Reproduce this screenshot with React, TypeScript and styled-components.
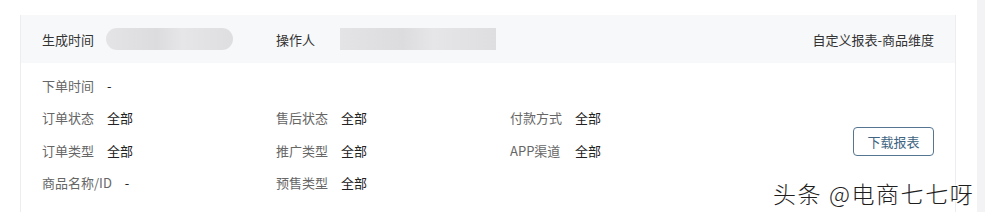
import styled, { createGlobalStyle } from "styled-components";

const GlobalStyle = createGlobalStyle`
  html, body {
    margin: 0;
    padding: 0;
    background: #fff;
    font-family: "Noto Sans CJK SC", "Liberation Sans", sans-serif;
  }
`;

type Field = { label: string; value: string };

const rows: (Field | null)[][] = [
  [{ label: "下单时间", value: "-" }, null, null],
  [
    { label: "订单状态", value: "全部" },
    { label: "售后状态", value: "全部" },
    { label: "付款方式", value: "全部" },
  ],
  [
    { label: "订单类型", value: "全部" },
    { label: "推广类型", value: "全部" },
    { label: "APP渠道", value: "全部" },
  ],
  [
    { label: "商品名称/ID", value: "-" },
    { label: "预售类型", value: "全部" },
    null,
  ],
];

export default function App() {
  return (
    <Page>
      <GlobalStyle />
      <Card>
        <Header>
          <HeaderItem>
            <HeaderLabel>生成时间</HeaderLabel>
            <Blur $width={127} $round />
          </HeaderItem>
          <HeaderItem>
            <HeaderLabel>操作人</HeaderLabel>
            <Blur $width={156} />
          </HeaderItem>
          <Title>自定义报表-商品维度</Title>
        </Header>
        <Body>
          <Grid>
            {rows.map((row, i) =>
              row.map((f, j) =>
                f ? (
                  <Cell key={`${i}-${j}`}>
                    <Label>{f.label}</Label>
                    <Value>{f.value}</Value>
                  </Cell>
                ) : (
                  <Cell key={`${i}-${j}`} />
                )
              )
            )}
          </Grid>
          <DownloadButton>下载报表</DownloadButton>
        </Body>
      </Card>
      <Scrollbar />
      <Watermark>头条 @电商七七呀</Watermark>
    </Page>
  );
}

const Page = styled.div`
  position: relative;
  display: flex;
  width: 985px;
  height: 212px;
  overflow: hidden;
  padding-top: 15px;
  padding-left: 20px;
  box-sizing: border-box;
`;

const Card = styled.div`
  width: 936px;
  height: 230px;
  border-left: 1px solid #ededef;
  border-right: 1px solid #ededef;
  box-sizing: border-box;
`;

const Header = styled.div`
  display: flex;
  align-items: center;
  height: 48px;
  padding: 0 21px 0 21px;
  background: #f7f8fa;
  font-size: 13px;
  color: #333;
`;

const HeaderItem = styled.div`
  display: flex;
  align-items: center;
  width: 234px;
`;

const HeaderLabel = styled.span`
  color: #333;
  width: 64px;
`;

const Blur = styled.div<{ $width: number; $round?: boolean }>`
  width: ${(p) => p.$width}px;
  height: 22px;
  background: linear-gradient(90deg, #e4e4e6, #dcdcde 40%, #e6e6e8 60%, #dedee0);
  border-radius: ${(p) => (p.$round ? "11px" : "0")};
  filter: blur(0.6px);
`;

const Title = styled.span`
  margin-left: auto;
  color: #333;
`;

const Body = styled.div`
  display: flex;
  align-items: flex-start;
  padding: 6px 21px 0 21px;
`;

const Grid = styled.div`
  display: grid;
  grid-template-columns: repeat(3, 234px);
  grid-auto-rows: 32.5px;
`;

const Cell = styled.div`
  display: flex;
  align-items: center;
  font-size: 13px;
`;

const Label = styled.span`
  color: #666;
  min-width: 52px;
  margin-right: 13px;
`;

const Value = styled.span`
  color: #222;
`;

const DownloadButton = styled.button`
  margin-left: auto;
  margin-top: 58px;
  width: 81px;
  height: 29px;
  border: 1px solid #557590;
  border-radius: 4px;
  background: #fff;
  color: #3e6482;
  font-family: inherit;
  font-size: 13px;
  padding: 0;
`;

const Scrollbar = styled.div`
  margin-left: auto;
  margin-top: -15px;
  width: 8px;
  height: 212px;
  background: #f3f3f6;
`;

const Watermark = styled.div`
  position: absolute;
  left: 773px;
  top: 176px;
  font-size: 23px;
  font-weight: 300;
  color: #1e1e1e;
  letter-spacing: 1.6px;
  text-shadow: 0 0 2px #fff, 0 0 2px #fff, 1px 1px 0 #fff;
  white-space: nowrap;
`;
